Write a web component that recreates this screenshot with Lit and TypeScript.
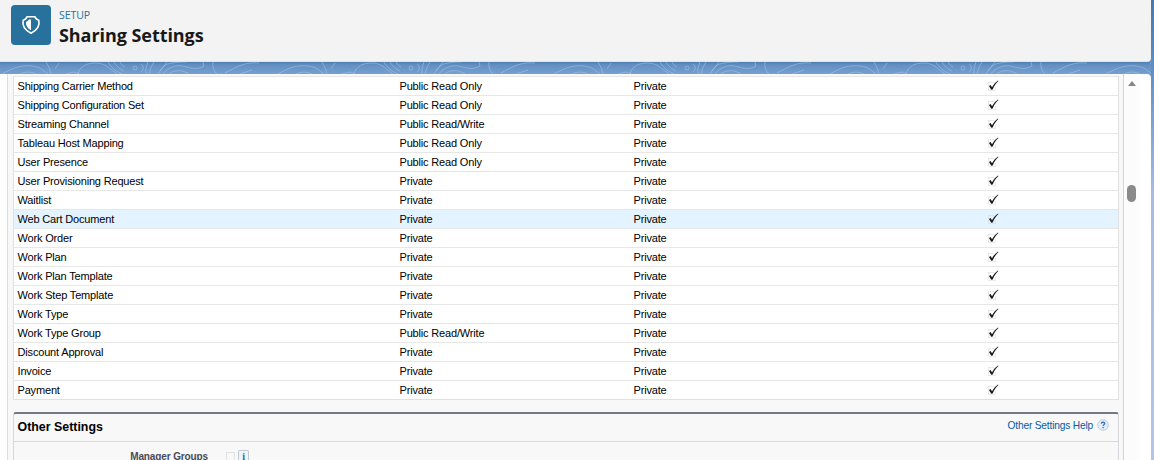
import { LitElement, html, css, svg } from "lit";
import { customElement } from "lit/decorators.js";

const RO = "Public Read Only";
const RW = "Public Read/Write";
const P = "Private";

const ROWS: [string, string][] = [
  ["Shipping Carrier Method", RO],
  ["Shipping Configuration Set", RO],
  ["Streaming Channel", RW],
  ["Tableau Host Mapping", RO],
  ["User Presence", RO],
  ["User Provisioning Request", P],
  ["Waitlist", P],
  ["Web Cart Document", P],
  ["Work Order", P],
  ["Work Plan", P],
  ["Work Plan Template", P],
  ["Work Step Template", P],
  ["Work Type", P],
  ["Work Type Group", RW],
  ["Discount Approval", P],
  ["Invoice", P],
  ["Payment", P],
];

@customElement("topo-band")
class TopoBand extends LitElement {
  static styles = css`
    :host { display: block; height: 12px; flex: none; }
    svg { display: block; }
  `;
  render() {
    return html`<svg width="1151" height="12" viewBox="0 0 1151 12">
      <defs>
        <linearGradient id="sky" x1="0" y1="0" x2="0" y2="1">
          <stop offset="0" stop-color="#4f80b2" />
          <stop offset=".25" stop-color="#648fc2" />
          <stop offset="1" stop-color="#75a0d1" />
        </linearGradient>
        <pattern id="topo" x="74" width="276" height="12" patternUnits="userSpaceOnUse">
          <g fill="none" stroke="#a6c4e2" stroke-opacity=".55" stroke-width="1">
            ${svg`
            <path d="M4 12C6 4 13 1 22 1S36 7 43 12" />
            <path d="M34 0C37 5 41 9 48 12M40 0C42 4 46 7 50 9M46 0C48 3 49 4 51 5" />
            <circle cx="61" cy="6" r="2" /><path d="M67 2c3 2 3 6 0 8M74 0q-3 6-2 12M80 0q-4 6-5 12" />
            <path d="M84 12C88 5 91 2 98 1S108 0 112 0M89 12C94 5 102 3 108 4S123 9 130 4L129 0M95 12C101 7 109 8 115 12M86 9L93 0" />
            <path d="M139 0Q138 8 143 12M151 11C166 3 172 0 185 1M166 12L178 8" />
            <path d="M204 12C216 5 224 3 234 4S246 10 250 12M222 12Q230 8 238 12M248 0Q252 6 253 12M257 7L261 1M268 12L276 10M0 10L5 12" />`}
          </g>
        </pattern>
      </defs>
      <rect width="1151" height="12" fill="url(#sky)" />
      <rect width="1151" height="12" fill="url(#topo)" />
    </svg>`;
  }
}

@customElement("app-root")
class AppRoot extends LitElement {
  static styles = css`
    :host {
      display: block; height: 460px; overflow: hidden; color: #000;
      font: 11px/18px "Liberation Sans", Arial, sans-serif; letter-spacing: -.17px;
      background: linear-gradient(#4678ad 0, #5f8fc4 70px, #a6bbdf 190px, #b4c5e4 460px);
    }
    .page { width: 1151px; height: 460px; display: flex; flex-direction: column; }
    .header {
      height: 62px; box-sizing: border-box; background: #f3f3f3; display: flex; gap: 8px;
      padding: 5px 11px; border-radius: 0 0 4px 0; border-bottom: 1px solid #dfe4ea; flex: none;
    }
    .tile { width: 40px; height: 40px; border-radius: 4px; background: #28719d; flex: none; }
    .tile svg { display: block; }
    .heading { display: flex; flex-direction: column; font-family: "Open Sans", "Noto Sans", sans-serif; white-space: nowrap; }
    .eyebrow { font-size: 10.5px; line-height: 14px; height: 18px; padding-top: 3px; box-sizing: border-box; color: #23719f; letter-spacing: -.05px; }
    .title { font-size: 18px; line-height: 24px; font-weight: 700; color: #181818; letter-spacing: -.06px; }
    .card { flex: 1; display: flex; background: #fff; border-radius: 0 4px 0 0; min-height: 0; }
    .main {
      box-sizing: border-box; margin-left: 7px; width: 1117px; padding: 2px 4px 0 5px;
      border-left: 1px solid #dcdcdc; border-right: 1px solid #d4d4d4; background: #f8f8f8;
      display: flex; flex-direction: column; gap: 12px; overflow: hidden; flex: none;
    }
    .table { border: 1px solid #e0e0e0; border-top: 0; background: #fff; flex: none; }
    .row {
      height: 19px; box-sizing: border-box; border-top: 1px solid #e7e7e7; padding: 0 0 0 3.5px;
      display: grid; grid-template-columns: 382px 234px 352.5px 1fr; white-space: nowrap;
    }
    .row.hot { background: #e3f3ff; }
    .check { display: block; margin-top: 1px; }
    .section { height: 120px; flex: none; border: 1px solid #d8d8dc; border-top: 2px solid #747689; border-radius: 3px 3px 0 0; }
    .bar { height: 27px; border-bottom: 1px solid #d8d8d8; display: flex; justify-content: space-between; padding: 0 9px 0 3.5px; }
    .bar .name { font-size: 12.4px; line-height: 27px; font-weight: 700; letter-spacing: 0; }
    .help { display: flex; gap: 4px; font-size: 10.2px; line-height: 24px; color: #015ba7; letter-spacing: -.18px; }
    .help svg { margin-top: 5px; }
    .setting { display: flex; align-items: flex-start; padding-top: 7px; }
    .label { width: 194px; text-align: right; font-size: 10px; letter-spacing: -.12px; font-weight: 700; color: #4a4a56; line-height: 16px; }
    .box { width: 9px; height: 9px; margin: 3px 3px 0 18px; border: 1px solid #e2e2e2; box-sizing: border-box; }
    .info { width: 11px; height: 12px; box-sizing: border-box; border: 1px solid #c3cad3; background: #eef4fb; color: #1767b5; font: 700 10px/11px "Liberation Serif", serif; text-align: center; margin-top: 1px; border-radius: 1px; }
    .scroll { width: 15px; background: #fcfcfc; display: flex; flex-direction: column; align-items: center; padding-top: 7px; }
    .arrow { border: 4.5px solid transparent; border-top: 0; border-bottom: 5px solid #858585; }
    .thumb { width: 9px; height: 17px; border-radius: 5px; background: #8a8a8a; margin-top: 99px; }
  `;

  render() {
    return html`<div class="page">
      <header class="header">
        <div class="tile">
          <svg width="40" height="40" viewBox="0 0 40 40">
            <path d="M16 11.8H24C24.4 13.5 25.6 14.6 27.8 15.2C29 20.5 25.6 25.3 20 28.2C14.4 25.3 11 20.5 12.2 15.2C14.4 14.6 15.6 13.5 16 11.8Z" fill="none" stroke="#fff" stroke-width="1.6" stroke-linejoin="round" />
            <path d="M20 14.5H17.8C17.2 15.8 16.3 16.5 14.9 17C14.7 20.7 16.5 23.2 20 25.3Z" fill="#fff" />
          </svg>
        </div>
        <div class="heading"><span class="eyebrow">SETUP</span><span class="title">Sharing Settings</span></div>
      </header>
      <topo-band></topo-band>
      <div class="card">
        <div class="main">
          <div class="table">
            ${ROWS.map(([name, access]) => html`<div class="row ${name === "Web Cart Document" ? "hot" : ""}">
              <span>${name}</span><span>${access}</span><span>${P}</span>
              <svg class="check" width="14" height="14" viewBox="0 0 14 14">
                <path d="M2.5 4.5V12.5H9.5V9M2.5 4.5H8" fill="none" stroke="#d4d4d4" stroke-dasharray="1 1" />
                <path d="M3 8L4.6 7L6 9.2C7.4 6.6 9.4 4.2 12 2.4L12.4 3C10 5.3 8.1 8.2 6.7 11.5L5.2 11.8Z" fill="#1c1c1c" />
              </svg>
            </div>`)}
          </div>
          <section class="section">
            <div class="bar">
              <span class="name">Other Settings</span>
              <span class="help">Other Settings Help
                <svg width="12" height="12" viewBox="0 0 12 12">
                  <circle cx="6" cy="6" r="5.3" fill="#e4edfa" stroke="#b9c8e2" stroke-width=".9" />
                  <path d="M4.3 4.6C4.4 2.8 7.7 2.8 7.7 4.6C7.7 5.7 6.1 5.8 6.1 7.1M6.1 8V9.2" fill="none" stroke="#3a6fb9" stroke-width="1.3" />
                </svg>
              </span>
            </div>
            <div class="setting"><span class="label">Manager Groups</span><span class="box"></span><span class="info">i</span></div>
          </section>
        </div>
        <div class="scroll"><div class="arrow"></div><div class="thumb"></div></div>
      </div>
    </div>`;
  }
}
